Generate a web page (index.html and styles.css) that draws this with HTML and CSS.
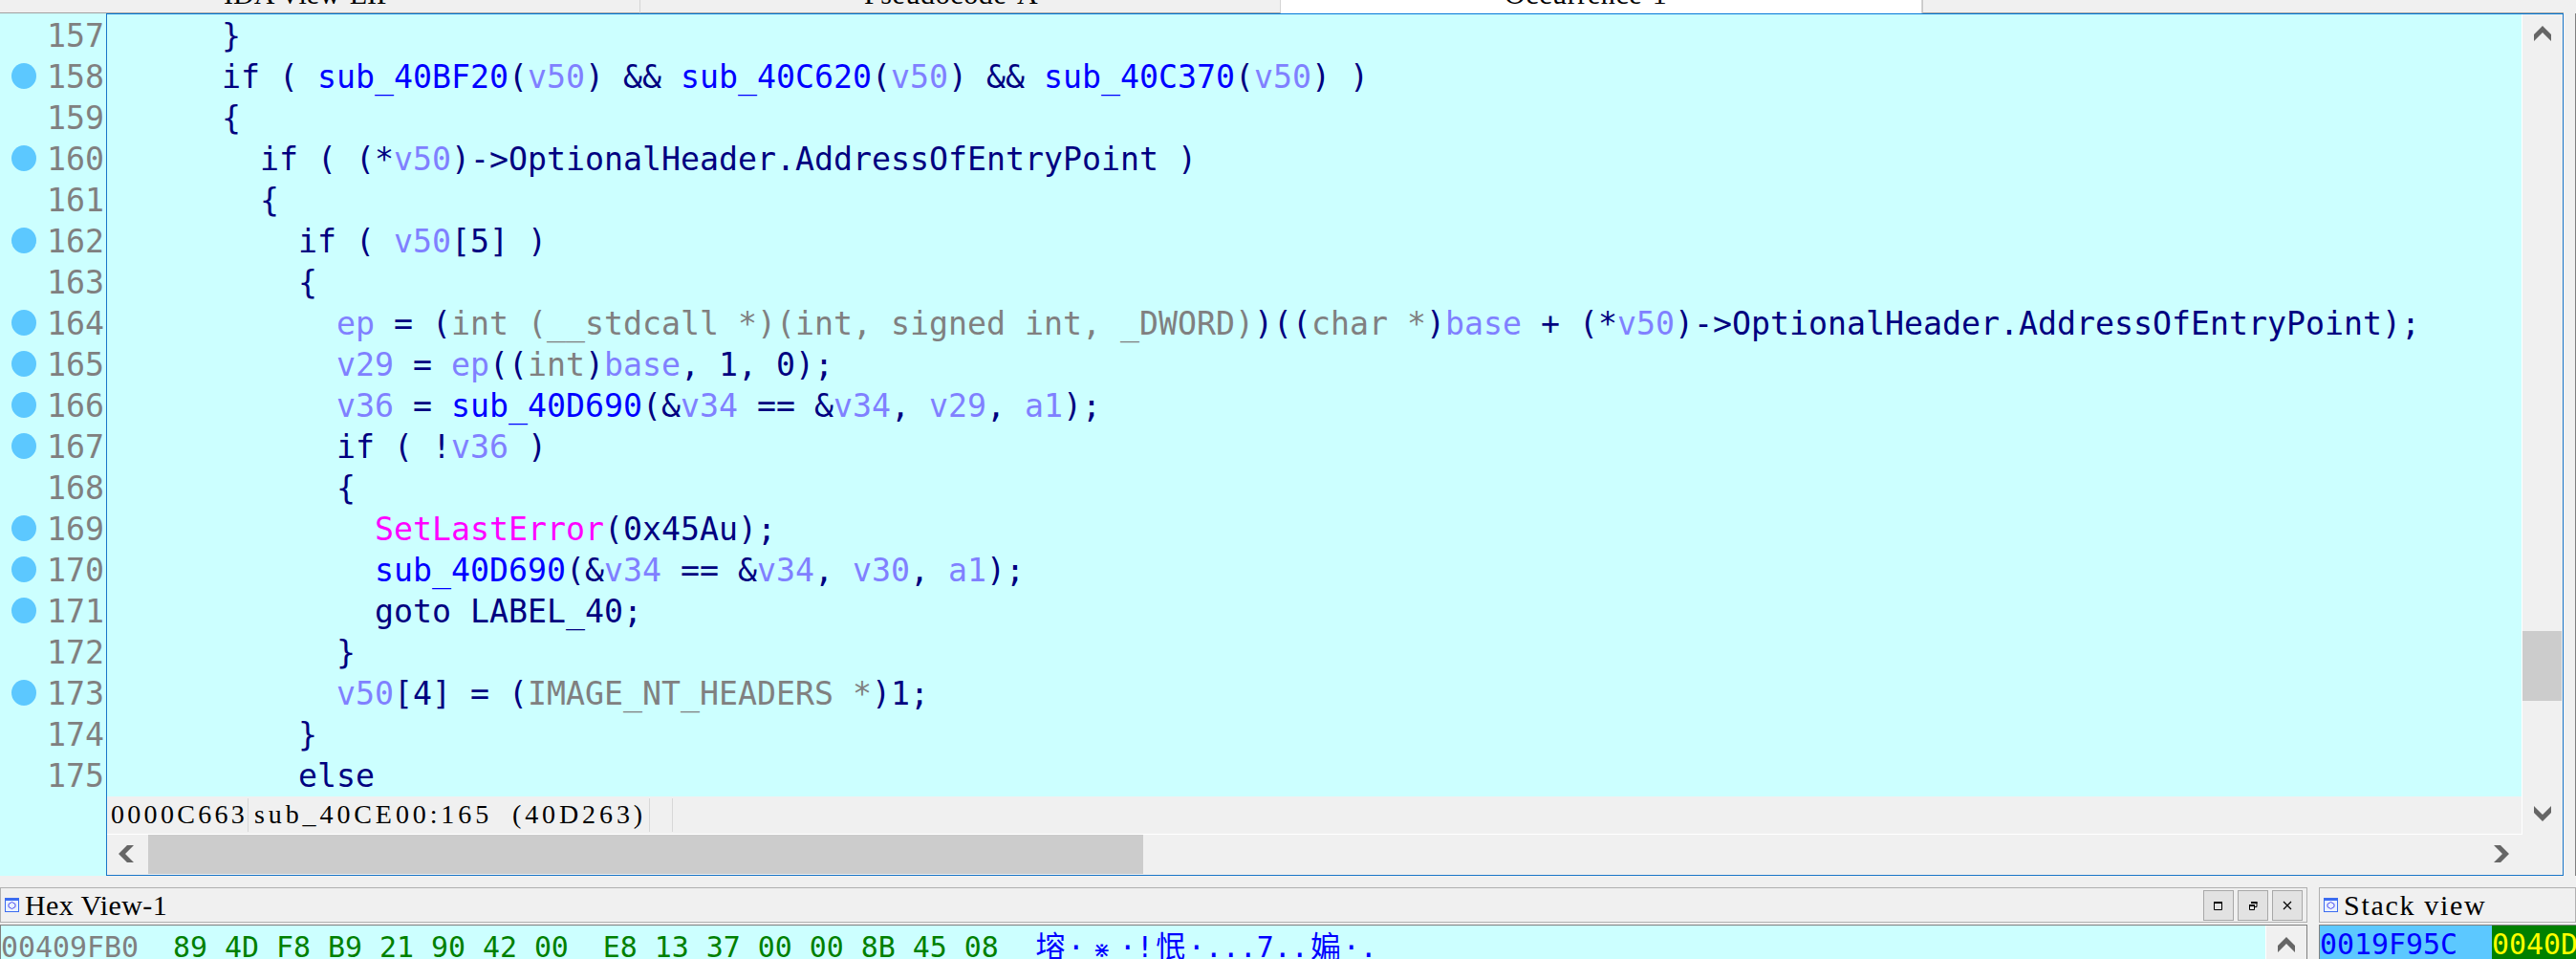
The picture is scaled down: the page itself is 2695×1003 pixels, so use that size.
FILE: index.html
```html
<!DOCTYPE html>
<html lang="en">
<head>
<meta charset="utf-8">
<title>IDA Pseudocode</title>
<link rel="stylesheet" href="styles.css">
</head>
<body>
<div class="tabs">
  <div class="tab"><span class="tab-label">IDA View-EIP</span></div>
  <div class="tab"><span class="tab-label tab-label-wide">Pseudocode-A</span></div>
  <div class="tab tab-active"><span class="tab-label tab-label-wide">Occurrence-1</span></div>
  <div class="tab-fill"></div>
</div>
<div class="editor-row">
  <div class="gutter">
    <div class="ln"><span class="no-dot"></span>157</div>
    <div class="ln"><span class="dot"></span>158</div>
    <div class="ln"><span class="no-dot"></span>159</div>
    <div class="ln"><span class="dot"></span>160</div>
    <div class="ln"><span class="no-dot"></span>161</div>
    <div class="ln"><span class="dot"></span>162</div>
    <div class="ln"><span class="no-dot"></span>163</div>
    <div class="ln"><span class="dot"></span>164</div>
    <div class="ln"><span class="dot"></span>165</div>
    <div class="ln"><span class="dot"></span>166</div>
    <div class="ln"><span class="dot"></span>167</div>
    <div class="ln"><span class="no-dot"></span>168</div>
    <div class="ln"><span class="dot"></span>169</div>
    <div class="ln"><span class="dot"></span>170</div>
    <div class="ln"><span class="dot"></span>171</div>
    <div class="ln"><span class="no-dot"></span>172</div>
    <div class="ln"><span class="dot"></span>173</div>
    <div class="ln"><span class="no-dot"></span>174</div>
    <div class="ln"><span class="no-dot"></span>175</div>
  </div>
  <div class="frame">
    <div class="frame-main">
      <div class="code-col">
        <pre class="code"><span class="k">      }</span>
<span class="k">      if ( </span><span class="f">sub_40BF20</span><span class="k">(</span><span class="v">v50</span><span class="k">) &amp;&amp; </span><span class="f">sub_40C620</span><span class="k">(</span><span class="v">v50</span><span class="k">) &amp;&amp; </span><span class="f">sub_40C370</span><span class="k">(</span><span class="v">v50</span><span class="k">) )</span>
<span class="k">      {</span>
<span class="k">        if ( (*</span><span class="v">v50</span><span class="k">)-&gt;OptionalHeader.AddressOfEntryPoint )</span>
<span class="k">        {</span>
<span class="k">          if ( </span><span class="v">v50</span><span class="k">[5] )</span>
<span class="k">          {</span>
<span class="k">            </span><span class="v">ep</span><span class="k"> = (</span><span class="t">int (__stdcall *)(int, signed int, _DWORD)</span><span class="k">)((</span><span class="t">char *</span><span class="k">)</span><span class="v">base</span><span class="k"> + (*</span><span class="v">v50</span><span class="k">)-&gt;OptionalHeader.AddressOfEntryPoint);</span>
<span class="k">            </span><span class="v">v29</span><span class="k"> = </span><span class="v">ep</span><span class="k">((</span><span class="t">int</span><span class="k">)</span><span class="v">base</span><span class="k">, 1, 0);</span>
<span class="k">            </span><span class="v">v36</span><span class="k"> = </span><span class="f">sub_40D690</span><span class="k">(&amp;</span><span class="v">v34</span><span class="k"> == &amp;</span><span class="v">v34</span><span class="k">, </span><span class="v">v29</span><span class="k">, </span><span class="v">a1</span><span class="k">);</span>
<span class="k">            if ( !</span><span class="v">v36</span><span class="k"> )</span>
<span class="k">            {</span>
<span class="k">              </span><span class="m">SetLastError</span><span class="k">(0x45Au);</span>
<span class="k">              </span><span class="f">sub_40D690</span><span class="k">(&amp;</span><span class="v">v34</span><span class="k"> == &amp;</span><span class="v">v34</span><span class="k">, </span><span class="v">v30</span><span class="k">, </span><span class="v">a1</span><span class="k">);</span>
<span class="k">              goto LABEL_40;</span>
<span class="k">            }</span>
<span class="k">            </span><span class="v">v50</span><span class="k">[4] = (</span><span class="t">IMAGE_NT_HEADERS *</span><span class="k">)1;</span>
<span class="k">          }</span>
<span class="k">          else</span></pre>
        <div class="status">
          <span class="st st-addr">0000C663</span><span class="st st-loc">sub_40CE00:165 (40D263)</span><span class="st st-empty"></span>
        </div>
      </div>
      <div class="vscroll">
        <svg class="arrow" viewBox="0 0 18 16"><path d="M0 9 9 0l9 9v7L9 7l-9 9z"/></svg>
        <div class="vtrack"><div class="vthumb"></div></div>
        <svg class="arrow" viewBox="0 0 18 16"><path d="M0 0l9 9 9-9v7l-9 9-9-9z"/></svg>
      </div>
    </div>
    <div class="hscroll">
      <svg class="harrow harrow-left" viewBox="0 0 16 18"><path d="M9 0 0 9l9 9h7L7 9l9-9z"/></svg>
      <div class="hthumb"></div>
      <div class="htrack"></div>
      <svg class="harrow" viewBox="0 0 16 18"><path d="M7 0l9 9-9 9H0l9-9-9-9z"/></svg>
    </div>
  </div>
  <div class="right-strip"></div>
</div>
<div class="bottom">
  <div class="panel panel-hex">
    <div class="titlebar">
      <svg class="winicon" viewBox="0 0 15 15"><rect width="15" height="15" fill="#3c6cf0"/><rect x="1" y="3" width="13" height="11" fill="#eaf2ff"/><path d="M7.500 4.500l3.500 2v3l-3.500 2-3.500-2v-3z" fill="none" stroke="#4a4af0"/></svg>
      <span class="title title-hex">Hex View-1</span>
      <span class="win-btns">
        <span class="wbtn"><svg viewBox="0 0 10 10"><path d="M.5 1.500h8v8h-8z" fill="none" stroke="#000"/><path d="M0 1h9v2H0z"/></svg></span>
        <span class="wbtn"><svg viewBox="0 0 10 10"><path d="M3 1.500h6v5H7" fill="none" stroke="#000"/><path d="M1.500 4.500h5v5h-5z" fill="none" stroke="#000"/><path d="M3 1h6.500v2H3zM1 4h6v2H1z"/></svg></span>
        <span class="wbtn"><svg viewBox="0 0 10 10"><path d="M1 1l8 8M9 1l-8 8" stroke="#000" stroke-width="1.200"/></svg></span>
      </span>
    </div>
    <div class="panel-body hex-body">
      <pre class="hex"><span class="hex-addr">00409FB0</span>  <span class="hex-bytes">89 4D F8 B9 21 90 42 00  E8 13 37 00 00 8B 45 08</span>  <span class="hex-ascii"><span class="w">塎</span>·<span class="w w-small">⋇</span>·!<span class="w">怋</span>·...7..<span class="w">媥</span>·.</span></pre>
      <div class="hex-scroll"><svg class="arrow" viewBox="0 0 18 16"><path d="M0 9 9 0l9 9v7L9 7l-9 9z"/></svg></div>
    </div>
  </div>
  <div class="panel panel-stack">
    <div class="titlebar">
      <svg class="winicon" viewBox="0 0 15 15"><rect width="15" height="15" fill="#3c6cf0"/><rect x="1" y="3" width="13" height="11" fill="#eaf2ff"/><path d="M7.500 4.500l3.500 2v3l-3.500 2-3.500-2v-3z" fill="none" stroke="#4a4af0"/></svg>
      <span class="title title-stack">Stack view</span>
    </div>
    <div class="panel-body stack-body">
      <span class="stack-addr">0019F95C</span><span class="stack-val">0040D</span>
    </div>
  </div>
</div>
</body>
</html>
```
FILE: styles.css
```css
html, body { margin: 0; padding: 0; }
body {
  width: 2695px;
  height: 1003px;
  overflow: hidden;
  background: #f0f0f0;
  display: flex;
  flex-direction: column;
}
.tabs {
  display: flex;
  height: 14px;
  flex: none;
  overflow: hidden;
}
.tab {
  width: 670px;
  height: 14px;
  flex: none;
  overflow: hidden;
  border-right: 1px solid #d4d4d4;
  border-bottom: 1px solid #a0a0a0;
  box-sizing: border-box;
  padding-left: 234px;
}
.tab-active {
  width: 671px;
  background: #fff;
  border-bottom: 0;
}
.tab-fill {
  width: 671px;
  height: 14px;
  flex: none;
  border-left: 1px solid #c8c8c8;
  border-bottom: 1px solid #a0a0a0;
  box-sizing: border-box;
}
.tab-label {
  font: 30px/30px "Liberation Serif", serif;
  color: #000;
  display: block;
  white-space: pre;
  margin-top: -21px;
}
.tab-label-wide { letter-spacing: .6px; }
.editor-row {
  display: flex;
  height: 902px;
  flex: none;
  background: #f0f0f0;
}
.gutter {
  width: 111px;
  flex: none;
  padding-top: 2px;
  background: #ccffff;
  box-sizing: border-box;
}
.ln {
  height: 43px;
  display: flex;
  align-items: center;
  font: 33.220px/43px "DejaVu Sans Mono", monospace;
  color: #808080;
  padding-left: 12px;
}
.dot {
  width: 26px;
  height: 27px;
  border-radius: 50%;
  background: #5cc8ff;
  margin: -2px 11px 0 0;
  flex: none;
}
.no-dot { width: 26px; margin-right: 11px; flex: none; }
.frame {
  width: 2571px;
  flex: none;
  box-sizing: border-box;
  border: 1px solid #1976c8;
  border-top-color: #0078d7;
  display: flex;
  flex-direction: column;
  background: #f0f0f0;
}
.frame-main { display: flex; flex: 1; min-height: 0; }
.code-col {
  flex: 1;
  display: flex;
  flex-direction: column;
  min-width: 0;
  border-bottom: 1px solid #fff;
}
.code {
  margin: 0;
  flex: 1;
  min-height: 0;
  background: #ccffff;
  font: 33.220px/43px "DejaVu Sans Mono", monospace;
  padding: 1px 0 0;
  overflow: hidden;
}
.k { color: #000080; }
.f { color: #0000ff; }
.v { color: #8080ff; }
.t { color: #808080; }
.m { color: #ff00ff; }
.status {
  height: 39px;
  flex: none;
  display: flex;
  align-items: flex-start;
  background: #f0f0f0;
  font: 28px/33px "Liberation Serif", serif;
  color: #000;
  padding-top: 2px;
  box-sizing: border-box;
}
.st {
  height: 35px;
  flex: none;
  box-sizing: border-box;
  border-right: 1px solid #d8d8d8;
  white-space: pre;
}
.st-addr { width: 148px; padding-left: 4px; letter-spacing: 3.300px; }
.st-loc { width: 420px; padding-left: 6px; letter-spacing: 3.900px; word-spacing: 10px; }
.st-empty { width: 24px; }
.vscroll {
  width: 43px;
  flex: none;
  border-left: 1px solid #fff;
  display: flex;
  flex-direction: column;
  align-items: center;
  box-sizing: border-box;
  padding: 12px 0 14px;
}
.arrow { width: 18px; height: 16px; fill: #666; flex: none; }
.vtrack { flex: 1; width: 100%; position: relative; }
.vthumb {
  position: absolute;
  top: 617px;
  left: 0;
  width: 41px;
  height: 73px;
  background: #cccccc;
}
.hscroll {
  height: 42px;
  flex: none;
  display: flex;
  align-items: flex-start;
  padding-right: 56px;
  box-sizing: border-box;
}
.harrow { width: 16px; height: 18px; fill: #666; flex: none; margin-top: 11px; }
.harrow-left { margin-left: 12px; margin-right: 15px; }
.hthumb { width: 1041px; height: 41px; background: #cccccc; flex: none; }
.htrack { flex: 1; }
.right-strip {
  flex: 1;
  border-right: 1px solid #808080;
}
.bottom {
  display: flex;
  margin-top: 12px;
  flex: 1;
  min-height: 0;
}
.panel { display: flex; flex-direction: column; }
.panel-hex { width: 2414px; flex: none; }
.panel-stack { flex: 1; margin-left: 12px; min-width: 0; }
.titlebar {
  height: 37px;
  box-sizing: border-box;
  border: 1px solid #b0b0b0;
  display: flex;
  align-items: center;
  background: #f0f0f0;
  flex: none;
}
.winicon { width: 15px; height: 15px; margin: 0 6px 0 4px; flex: none; }
.title { font: 30px/34px "Liberation Serif", serif; color: #000; white-space: pre; }
.title-hex { letter-spacing: .4px; }
.title-stack { letter-spacing: 1.700px; }
.win-btns { margin-left: auto; display: flex; gap: 4px; padding: 1px 4px 0 0; }
.wbtn {
  width: 32px;
  height: 32px;
  box-sizing: border-box;
  border: 1px solid #a8a8a8;
  background: #e2e2e2;
  display: flex;
  align-items: center;
  justify-content: center;
}
.wbtn svg { width: 10px; height: 10px; }
.panel-body {
  margin-top: 2px;
  flex: 1;
  min-height: 0;
  box-sizing: border-box;
  overflow: hidden;
}
.hex-body {
  border: 1px solid #808080;
  border-bottom: 0;
  display: flex;
  background: #ccffff;
}
.hex {
  margin: 0;
  flex: 1;
  min-width: 0;
  padding-top: 2px;
  font: 29.900px/36px "DejaVu Sans Mono", monospace;
  overflow: hidden;
}
.hex-addr { color: #808080; }
.hex-bytes { color: #008000; }
.hex-ascii { color: #0000ff; }
.w {
  display: inline-block;
  width: 36px;
  text-align: center;
  font-family: "Noto Sans CJK SC", sans-serif;
  font-size: 31px;
}
.w-small { font-family: "DejaVu Sans", sans-serif; font-size: 22px; }
.hex-scroll {
  width: 43px;
  flex: none;
  background: #f0f0f0;
  border-left: 1px solid #fff;
  display: flex;
  justify-content: center;
  align-items: flex-start;
  padding-top: 12px;
  box-sizing: border-box;
}
.stack-body {
  border-top: 1px solid #808080;
  border-left: 1px solid #808080;
  font: 29.900px/36px "DejaVu Sans Mono", monospace;
  display: flex;
  background: #ccffff;
}
.stack-addr {
  width: 180px;
  padding-top: 2px;
  background: #5cc8ff;
  color: #0000ff;
  flex: none;
}
.stack-val {
  flex: 1;
  padding-top: 2px;
  background: #008000;
  color: #ffff00;
}
```
